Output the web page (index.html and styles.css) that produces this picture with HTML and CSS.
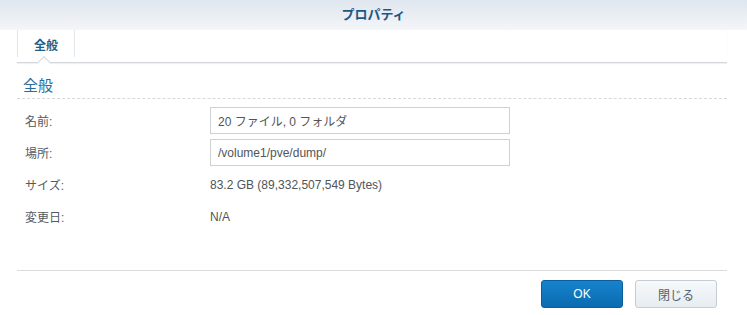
FILE: index.html
```html
<!DOCTYPE html>
<html lang="ja">
<head>
    <meta charset="UTF-8">
    <title>プロパティ</title>
    <link rel="stylesheet" href="styles.css">
</head>
<body>
    <div class="dialog">
        <div class="title-bar">プロパティ</div>

        <div class="tab-bar">
            <div class="tab active">全般</div>
        </div>

        <div class="panel">
            <h2 class="section-title">全般</h2>

            <div class="form">
                <div class="form-row">
                    <label class="form-label">名前:</label>
                    <input class="form-input" type="text" value="20 ファイル, 0 フォルダ">
                </div>
                <div class="form-row">
                    <label class="form-label">場所:</label>
                    <input class="form-input" type="text" value="/volume1/pve/dump/">
                </div>
                <div class="form-row">
                    <label class="form-label">サイズ:</label>
                    <span class="form-value">83.2 GB (89,332,507,549 Bytes)</span>
                </div>
                <div class="form-row">
                    <label class="form-label">変更日:</label>
                    <span class="form-value">N/A</span>
                </div>
            </div>
        </div>

        <div class="footer">
            <button class="btn btn-primary">OK</button>
            <button class="btn btn-default">閉じる</button>
        </div>
    </div>
</body>
</html>
```

FILE: styles.css
```css
* {
    margin: 0;
    padding: 0;
    box-sizing: border-box;
}

body {
    font-family: 'Liberation Sans', 'Noto Sans CJK JP', sans-serif;
    font-size: 12px;
    color: #505559;
    background: white;
    width: 747px;
    height: 315px;
    overflow: hidden;
}

.dialog {
    display: flex;
    flex-direction: column;
    height: 315px;
}

.title-bar {
    height: 30px;
    line-height: 29px;
    text-align: center;
    font-size: 13px;
    font-weight: bold;
    color: #1d5883;
    background: linear-gradient(to bottom, #dfe6ee 0%, #f4f6f9 100%);
}

.tab-bar {
    display: flex;
    height: 33px;
    margin: 0 20px 0 17px;
    border-bottom: 1px solid #d4d8dc;
    box-shadow: 0 1px 1px rgba(0,0,0,0.06);
}

.tab {
    position: relative;
    width: 58px;
    padding-top: 6px;
    text-align: center;
    font-weight: bold;
    color: #1e5f8a;
    border-left: 1px solid #e4e7ea;
    border-right: 1px solid #e4e7ea;
    margin-bottom: 5px;
}

/* little notch under the active tab */
.tab.active::after {
    content: '';
    position: absolute;
    left: 21px;
    bottom: -11px;
    width: 9px;
    height: 9px;
    background: white;
    border-left: 1px solid #d4d8dc;
    border-top: 1px solid #d4d8dc;
    transform: rotate(45deg);
}

.panel {
    flex: 1;
    margin: 0 20px 0 17px;
}

.section-title {
    font-size: 15px;
    font-weight: normal;
    color: #2a6c98;
    padding: 11px 0 0 6px;
    height: 36px;
    border-bottom: 1px dashed #d4d9de;
}

.form {
    display: flex;
    flex-direction: column;
    gap: 5px;
    padding-top: 8px;
}

.form-row {
    display: flex;
    align-items: center;
    height: 27px;
}

.form-label {
    width: 193px;
    padding-left: 8px;
    color: #555a5e;
}

.form-input {
    width: 300px;
    height: 27px;
    padding: 0 7px;
    border: 1px solid #cdd1d5;
    font-family: inherit;
    font-size: 12px;
    color: #505559;
    outline: none;
}

.form-value {
    color: #505559;
}

.footer {
    display: flex;
    justify-content: flex-end;
    gap: 12px;
    height: 45px;
    margin: 0 20px 0 17px;
    padding: 9px 10px 0 0;
    border-top: 1px solid #d8dcdf;
}

.btn {
    width: 82px;
    height: 28px;
    border-radius: 3px;
    font-family: inherit;
    font-size: 12px;
    cursor: pointer;
}

.btn-primary {
    color: white;
    background: linear-gradient(to bottom, #1683cc 0%, #0b6bb0 100%);
    border: 1px solid #0b5e9c;
}

.btn-default {
    color: #51606c;
    background: linear-gradient(to bottom, #f7f9fb 0%, #e6ecf1 100%);
    border: 1px solid #c5ced6;
}
```
